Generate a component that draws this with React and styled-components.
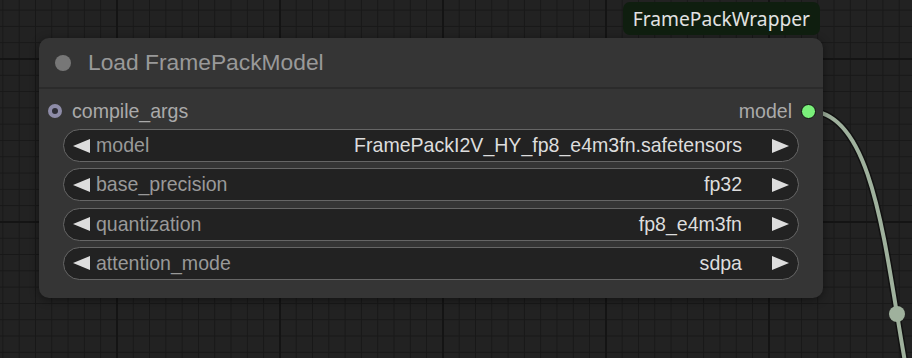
import styled, { createGlobalStyle } from "styled-components";

const GlobalStyle = createGlobalStyle`
  html, body {
    margin: 0;
    padding: 0;
    height: 100%;
  }
  body {
    overflow: hidden;
    font-family: "Liberation Sans", Arial, sans-serif;
    background-color: #222222;
    background-image:
      linear-gradient(to right, #141414 2px, transparent 2px),
      linear-gradient(to bottom, #141414 2px, transparent 2px),
      linear-gradient(to right, #181818 1px, transparent 1px),
      linear-gradient(to bottom, #181818 1px, transparent 1px);
    background-size: 163px 163px, 163px 163px, 16.3px 16.3px, 16.3px 16.3px;
    background-position: 116px 0, 0 58px, 2.4px 0, 0 9.6px;
  }
`;

const Canvas = styled.div`
  position: relative;
  width: 912px;
  height: 358px;
`;

const Links = styled.svg`
  position: absolute;
  left: 0;
  top: 0;
  width: 912px;
  height: 358px;
  z-index: 1;
`;

const Node = styled.div`
  position: absolute;
  left: ${({ x }) => x}px;
  top: ${({ y }) => y}px;
  width: ${({ w }) => w}px;
  z-index: 2;
  background: #353535;
  border-radius: 10px;
  box-shadow: 0 2px 10px rgba(0, 0, 0, 0.45);
  display: flex;
  flex-direction: column;
  padding-bottom: 18px;
`;

const Badge = styled.div`
  position: absolute;
  right: 3px;
  bottom: calc(100% + 3px);
  height: 33px;
  padding: 0 10px;
  display: flex;
  align-items: center;
  background: #0f1e0f;
  border-radius: 7px;
  color: #e2e2e2;
  font-family: "Noto Sans", "Open Sans", sans-serif;
  font-size: 19.2px;
`;

const TitleBar = styled.div`
  height: 51px;
  box-sizing: border-box;
  border-bottom: 2px solid #2b2b2b;
  display: flex;
  align-items: center;
  padding-left: 16px;
  gap: 17px;
  color: #999999;
  font-size: 22.8px;
`;

const TitleDot = styled.span`
  width: 16px;
  height: 16px;
  border-radius: 50%;
  background: #777777;
`;

const SlotRow = styled.div`
  height: 32px;
  margin: 6px 0 2px;
  display: flex;
  align-items: center;
  justify-content: space-between;
  padding: 0 7px 0 9px;
  color: #aaaaaa;
  font-size: 19.56px;
`;

const Slot = styled.div`
  display: flex;
  align-items: center;
  gap: ${({ out }) => (out ? "9px" : "10px")};
`;

const InputDot = styled.span`
  width: 14px;
  height: 14px;
  box-sizing: border-box;
  border-radius: 50%;
  border: 4.5px solid #8e8ca8;
  background: #2e2e36;
`;

const OutputDot = styled.span`
  width: 15px;
  height: 15px;
  box-sizing: border-box;
  border-radius: 50%;
  border: 1.5px solid #111111;
  background: #7af07a;
`;

const Widgets = styled.div`
  display: flex;
  flex-direction: column;
  gap: 6.3px;
  padding: 0 24px;
`;

const Combo = styled.div`
  height: 33px;
  box-sizing: border-box;
  border: 1.6px solid #666666;
  border-radius: 17px;
  background: #222222;
  display: flex;
  align-items: center;
  padding: 0 9px 0 9px;
  font-size: 19.56px;
`;

const Arrow = styled.span`
  width: 0;
  height: 0;
  border-top: 7.5px solid transparent;
  border-bottom: 7.5px solid transparent;
  ${({ dir }) =>
    dir === "left"
      ? "border-right: 17px solid #dddddd;"
      : "border-left: 17px solid #dddddd;"}
`;

const Label = styled.span`
  color: #999999;
  margin-left: 6px;
  white-space: nowrap;
`;

const Value = styled.span`
  flex: 1;
  color: #dddddd;
  text-align: right;
  margin-right: 30px;
  white-space: nowrap;
`;

const widgets = [
  { name: "model", value: "FramePackI2V_HY_fp8_e4m3fn.safetensors" },
  { name: "base_precision", value: "fp32" },
  { name: "quantization", value: "fp8_e4m3fn" },
  { name: "attention_mode", value: "sdpa" },
];

function Link() {
  const d = "M 809 111 C 919.6 111, 874.4 517, 985 517";
  return (
    <Links viewBox="0 0 912 358">
      <path d={d} fill="none" stroke="#111111" strokeWidth="7" />
      <path d={d} fill="none" stroke="#9fb19d" strokeWidth="4" />
      <circle cx="897" cy="314" r="8" fill="#9fb19d" />
    </Links>
  );
}

export default function App() {
  return (
    <Canvas>
      <GlobalStyle />
      <Link />
      <Node x={39} y={38} w={784}>
        <Badge>FramePackWrapper</Badge>
        <TitleBar>
          <TitleDot />
          Load FramePackModel
        </TitleBar>
        <SlotRow>
          <Slot>
            <InputDot />
            compile_args
          </Slot>
          <Slot out>
            model
            <OutputDot />
          </Slot>
        </SlotRow>
        <Widgets>
          {widgets.map((w) => (
            <Combo key={w.name}>
              <Arrow dir="left" />
              <Label>{w.name}</Label>
              <Value>{w.value}</Value>
              <Arrow dir="right" />
            </Combo>
          ))}
        </Widgets>
      </Node>
    </Canvas>
  );
}
